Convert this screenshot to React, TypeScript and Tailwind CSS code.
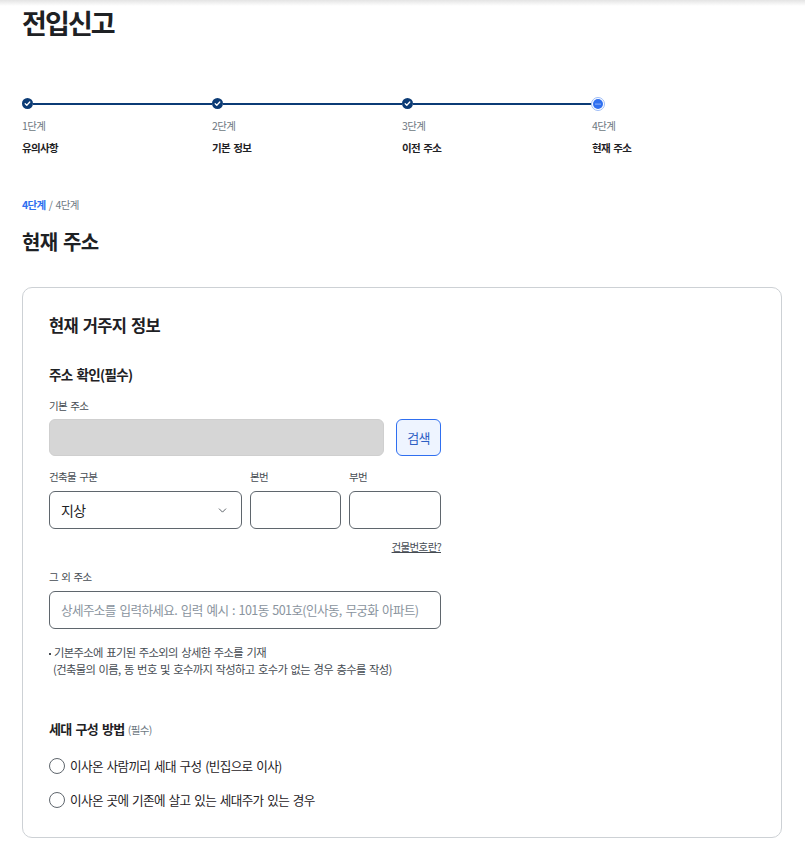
import { ChevronDown } from "lucide-react";

const FONT = "font-['Noto_Sans_CJK_KR','Noto_Sans',sans-serif]";

const STEPS = [
  { no: "1단계", name: "유의사항", done: true },
  { no: "2단계", name: "기본 정보", done: true },
  { no: "3단계", name: "이전 주소", done: true },
  { no: "4단계", name: "현재 주소", done: false },
];

function DoneDot() {
  return (
    <svg width="11" height="11" viewBox="0 0 11 11" className="shrink-0">
      <circle cx="5.5" cy="5.5" r="5.5" fill="#0b3b75" />
      <path d="M3.2 5.7 L4.8 7.2 L7.8 4" fill="none" stroke="#fff" strokeWidth="1.3" strokeLinecap="round" strokeLinejoin="round" />
    </svg>
  );
}

function CurrentDot() {
  return (
    <svg width="14" height="14" viewBox="0 0 14 14" className="shrink-0 -ml-[1.5px]">
      <circle cx="7" cy="7" r="6.5" fill="#fff" stroke="#9dbcf7" strokeWidth="1" />
      <circle cx="7" cy="7" r="5" fill="#2f6ff0" />
      <circle cx="5" cy="7" r="0.6" fill="#fff" />
      <circle cx="7" cy="7" r="0.6" fill="#fff" />
      <circle cx="9" cy="7" r="0.6" fill="#fff" />
    </svg>
  );
}

export default function App() {
  return (
    <div className={`${FONT} min-h-[849px] bg-white text-[#1e2124] relative tracking-[-0.04em] [word-spacing:1.5px]`}>
      <div className="absolute top-0 left-0 right-0 h-[6px] bg-gradient-to-b from-[#e4e4e4] to-white" />
      <div className="pl-[22px] pr-[24px] pt-[4px]">
        <h1 className="text-[27px] font-bold leading-[38px] tracking-[-0.07em]">전입신고</h1>

        {/* stepper */}
        <div className="mt-[55px] flex">
          {STEPS.map((s, i) => (
            <div key={s.no} className="w-[190px] shrink-0">
              <div className="flex items-center h-[13px]">
                {s.done ? <DoneDot /> : <CurrentDot />}
                {i < STEPS.length - 1 && <div className="flex-1 h-[2px] bg-[#0b3b75]" />}
              </div>
              <div className="mt-[9px] text-[10.5px] leading-[14px] text-[#6d7882]">{s.no}</div>
              <div className="mt-[8px] text-[10.5px] leading-[14px] font-bold text-[#1e2124]">{s.name}</div>
            </div>
          ))}
        </div>

        <div className="mt-[43px] text-[10.5px] leading-[14px]">
          <span className="font-bold text-[#2f6ff0]">4단계</span>
          <span className="text-[#6d7882]"> / 4단계</span>
        </div>
        <h2 className="mt-[16px] text-[20px] font-bold leading-[28px]">현재 주소</h2>

        {/* card */}
        <div className="mt-[31px] w-[760px] border border-[#cdd1d5] rounded-[10px] pl-[26px] pr-[26px] pt-[25px] pb-[27px]">
          <h3 className="text-[16.5px] font-bold leading-[24px]">현재 거주지 정보</h3>

          <div className="w-[392px]">
            <h4 className="mt-[27px] text-[13.5px] font-bold leading-[20px]">주소 확인(필수)</h4>

            <div className="mt-[15px] text-[10.5px] leading-[14px] text-[#464c53]">기본 주소</div>
            <div className="mt-[6px] flex gap-[12px]">
              <div className="flex-1 h-[37px] rounded-[6px] bg-[#d6d6d6] border border-[#cfcfcf]" />
              <button className="w-[45px] h-[37px] rounded-[6px] border border-[#2f6ff0] bg-[#eef4ff] text-[13px] text-[#2d5fc4]">
                검색
              </button>
            </div>

            <div className="mt-[14px] flex gap-[8px]">
              <div className="w-[193px]">
                <div className="text-[10.5px] leading-[14px] text-[#464c53]">건축물 구분</div>
                <div className="mt-[7px] h-[38px] rounded-[6px] border border-[#5f666d] flex items-center justify-between pl-[11px] pr-[12px]">
                  <span className="text-[14px]">지상</span>
                  <ChevronDown size={13} strokeWidth={1.6} className="text-[#464c53]" />
                </div>
              </div>
              <div className="w-[91px]">
                <div className="text-[10.5px] leading-[14px] text-[#464c53]">본번</div>
                <div className="mt-[7px] h-[38px] rounded-[6px] border border-[#5f666d]" />
              </div>
              <div className="flex-1">
                <div className="text-[10.5px] leading-[14px] text-[#464c53]">부번</div>
                <div className="mt-[7px] h-[38px] rounded-[6px] border border-[#5f666d]" />
              </div>
            </div>

            <div className="mt-[11px] text-right text-[10.5px] leading-[14px] text-[#464c53] underline">건물번호란?</div>

            <div className="mt-[16px] text-[10.5px] leading-[14px] text-[#464c53]">그 외 주소</div>
            <div className="mt-[7px] h-[38px] rounded-[6px] border border-[#5f666d] flex items-center px-[11px]">
              <span className="text-[12.6px] tracking-[-0.05em] text-[#8a949e] whitespace-nowrap">
                상세주소를 입력하세요. 입력 예시 : 101동 501호(인사동, 무궁화 아파트)
              </span>
            </div>
          </div>

          <div className="mt-[15px] text-[11.3px] leading-[17px] text-[#464c53]">
            <div>
              <span className="inline-block w-[2px] h-[2px] bg-[#464c53] align-middle mr-[3px]" />
              기본주소에 표기된 주소외의 상세한 주소를 기재
            </div>
            <div className="pl-[4px]">(건축물의 이름, 동 번호 및 호수까지 작성하고 호수가 없는 경우 층수를 작성)</div>
          </div>

          <div className="mt-[39px] leading-[20px]">
            <span className="text-[13px] font-bold">세대 구성 방법</span>
            <span className="text-[10.5px] text-[#6d7882]"> (필수)</span>
          </div>

          <div className="mt-[16px] flex flex-col gap-[14px]">
            {["이사온 사람끼리 세대 구성 (빈집으로 이사)", "이사온 곳에 기존에 살고 있는 세대주가 있는 경우"].map((t) => (
              <label key={t} className="flex items-center gap-[5px] h-[20px]">
                <span className="w-[16px] h-[16px] rounded-full border border-[#5f666d] bg-white shrink-0" />
                <span className="text-[12.6px] text-[#1e2124]">{t}</span>
              </label>
            ))}
          </div>
        </div>
      </div>
    </div>
  );
}
